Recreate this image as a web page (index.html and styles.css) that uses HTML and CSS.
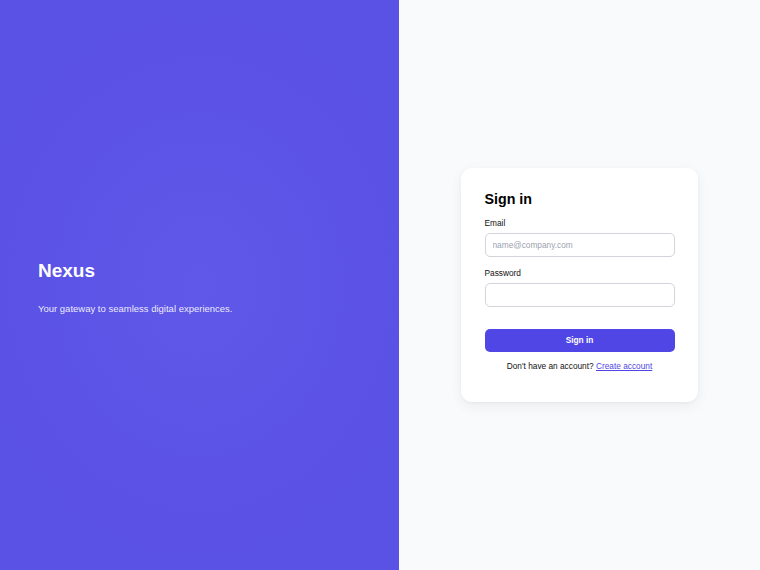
FILE: index.html
```html
<!DOCTYPE html>
<html lang="en">
<head>
<meta charset="utf-8">
<title>Nexus — Sign in</title>
<link rel="stylesheet" href="styles.css">
</head>
<body>
<main class="layout">
  <section class="brand">
    <div class="brand-copy">
      <h1 class="brand-name">Nexus</h1>
      <p class="brand-tagline">Your gateway to seamless digital experiences.</p>
    </div>
  </section>
  <section class="auth">
    <form class="card">
      <h2 class="card-title">Sign in</h2>
      <label class="field">
        <span class="field-label">Email</span>
        <input class="field-input" type="email" placeholder="name@company.com">
      </label>
      <label class="field">
        <span class="field-label">Password</span>
        <input class="field-input" type="password">
      </label>
      <button class="submit" type="button">Sign in</button>
      <p class="alt">Don't have an account? <a href="#" class="alt-link">Create account</a></p>
    </form>
  </section>
</main>
</body>
</html>
```

FILE: styles.css
```css
* { box-sizing: border-box; }

html, body {
  margin: 0;
  height: 100%;
}

body {
  font-family: "Liberation Sans", Arial, sans-serif;
  color: #111827;
}

.layout {
  display: flex;
  height: 100%;
}

/* Brand panel */
.brand {
  flex: 0 0 52.5%;
  display: flex;
  align-items: center;
  padding: 5px 38px 0;
  color: #fff;
  background: radial-gradient(ellipse 60% 50% at 50% 50%, #6058e8 0%, #5c54e6 55%, #5a51e5 100%);
}

.brand-name {
  margin: 0 0 20px;
  font-size: 19px;
  line-height: 23px;
  font-weight: 700;
}

.brand-tagline {
  margin: 0;
  font-size: 9.5px;
  line-height: 14px;
  color: rgba(255, 255, 255, 0.9);
}

/* Sign-in panel */
.auth {
  flex: 1;
  display: flex;
  align-items: center;
  justify-content: center;
  background: #f9fafb;
}

.card {
  width: 237.5px;
  padding: 23px 23.75px 31px;
  margin-top: -1px;
  background: #fff;
  border-radius: 11px;
  box-shadow: 0 4px 14px rgba(17, 24, 39, 0.06), 0 1px 3px rgba(17, 24, 39, 0.04);
}

.card-title {
  margin: 0 0 11px;
  font-size: 14.25px;
  line-height: 16px;
  font-weight: 700;
  color: #000;
}

.field {
  display: block;
  margin-bottom: 11px;
}

.field-label {
  display: block;
  margin-bottom: 5px;
  font-size: 8.3px;
  line-height: 10px;
  color: #111;
}

.field-input {
  display: block;
  width: 100%;
  height: 24px;
  padding: 0 7px;
  border: 1px solid #d1d5db;
  border-radius: 5px;
  font-family: inherit;
  font-size: 8.3px;
  background: #fff;
}

.field-input::placeholder { color: #9ca3af; }

.submit {
  display: block;
  width: 100%;
  height: 23px;
  margin-top: 22px;
  padding: 0;
  border: 0;
  border-radius: 5px;
  background: #4f46e5;
  color: #fff;
  font-family: inherit;
  font-size: 8.3px;
  font-weight: 700;
}

.alt {
  margin: 9px 0 0;
  text-align: center;
  font-size: 8.3px;
  line-height: 10px;
  color: #111;
}

.alt-link { color: #4f46e5; }
```
